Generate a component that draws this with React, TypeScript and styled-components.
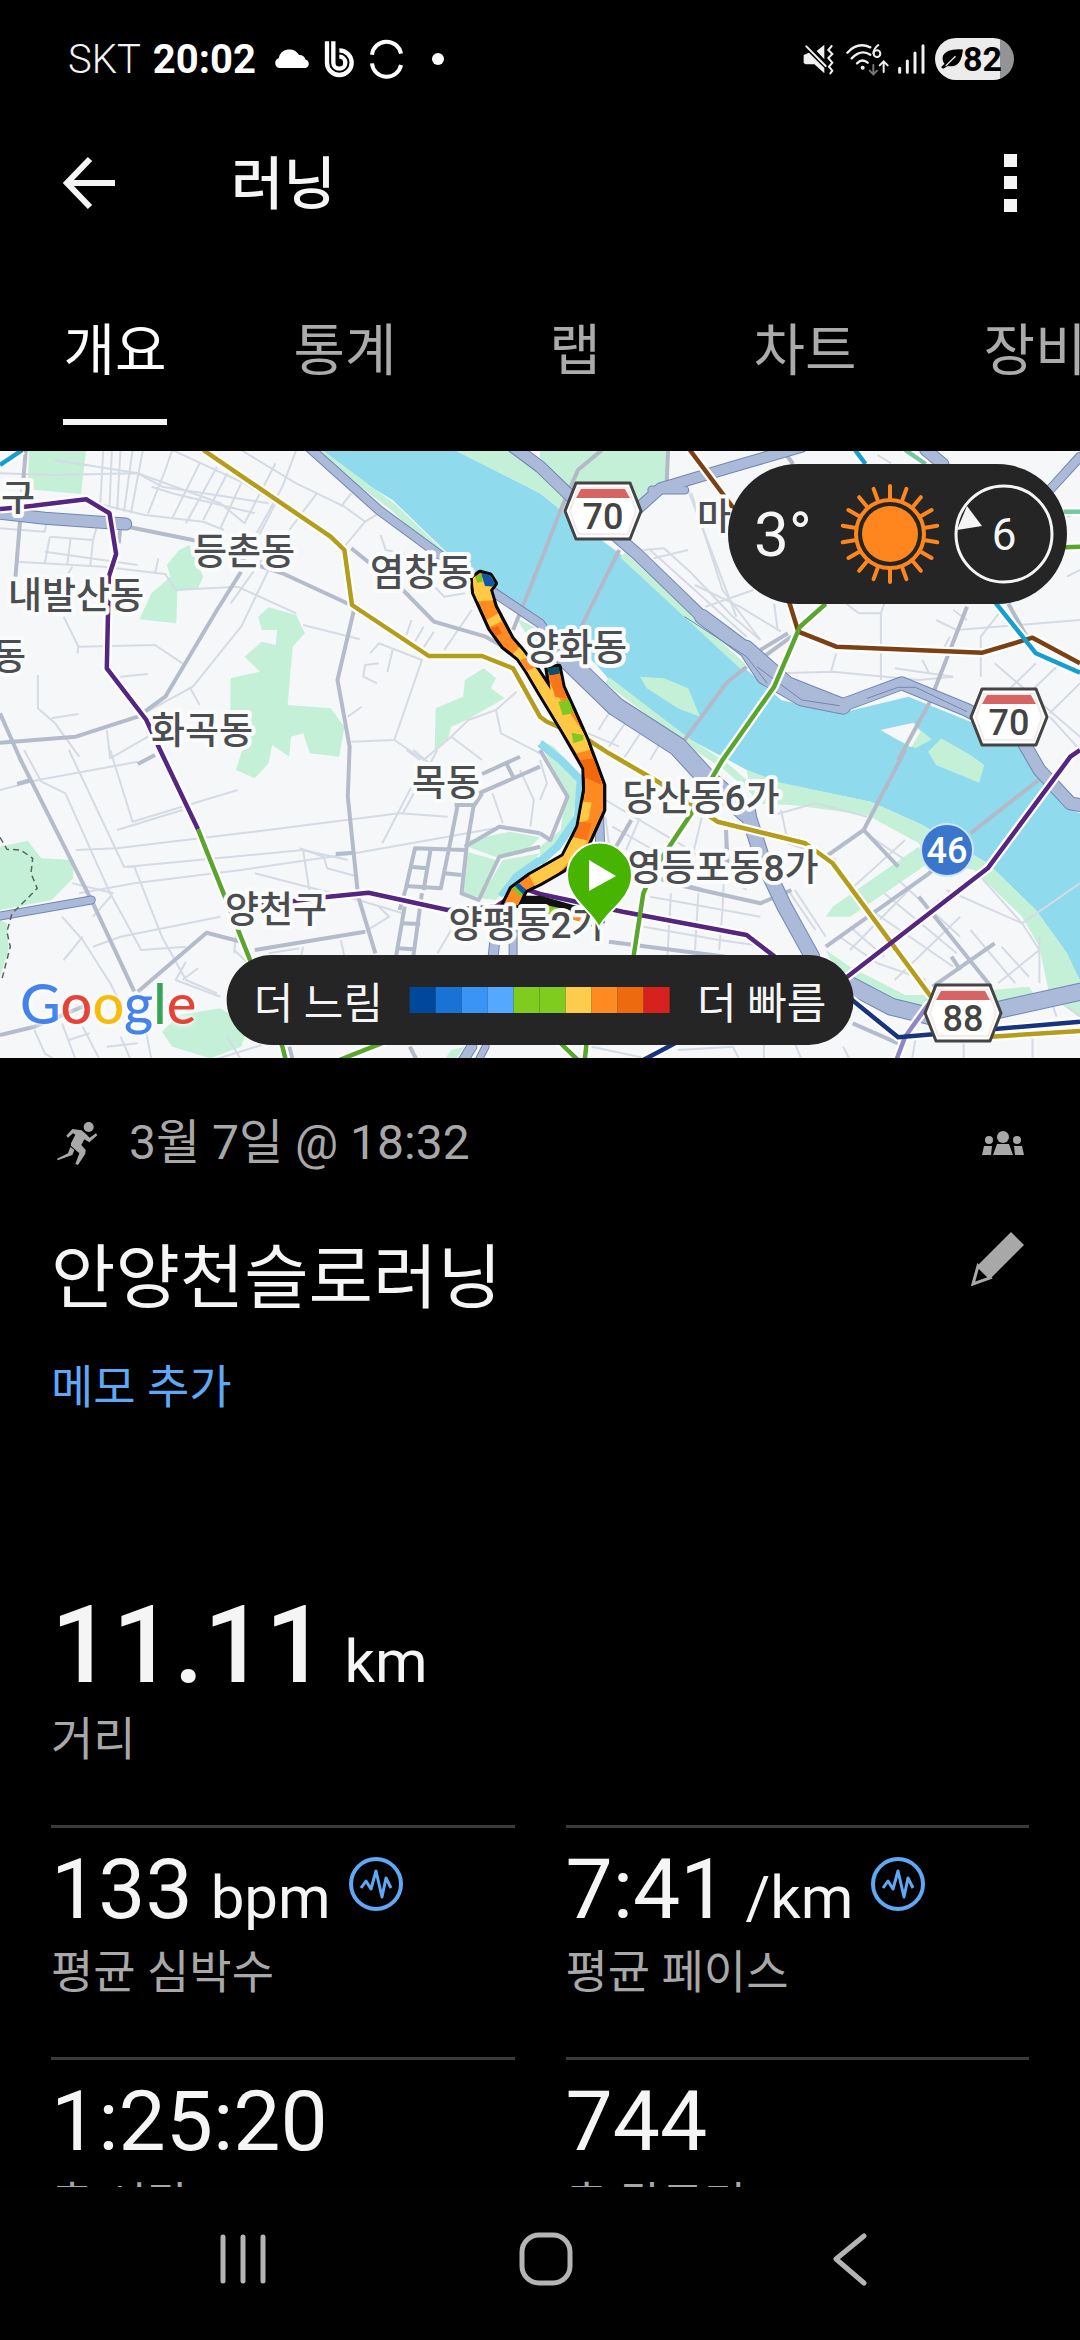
import React from "react";
import styled, { createGlobalStyle } from "styled-components";

const GlobalStyle = createGlobalStyle`
  * { box-sizing: border-box; }
  html, body { margin: 0; background: #000; }
  body { font-family: Roboto, "Noto Sans CJK KR", sans-serif; color: #f5f5f5; }
  h1, h2, p, dl, dd, dt { margin: 0; font-weight: 400; }
`;

/* ---------- map geometry ---------- */

type Tile = "nw" | "ne" | "sw" | "se";
const TILE_ORIGIN: Record<Tile, [number, number]> = {
  nw: [0, 0],
  ne: [1568, 0],
  sw: [0, 900],
  se: [1568, 900],
};

/* "nw 0,10 20,30 ne 5,5" -> one point list in map units */
const plot = (source: string) => {
  let [ox, oy] = TILE_ORIGIN.nw;
  const out: string[] = [];
  source.split(" ").forEach((token) => {
    if (token in TILE_ORIGIN) {
      [ox, oy] = TILE_ORIGIN[token as Tile];
      return;
    }
    const [x, y] = token.split(",").map(Number);
    out.push(`${((x + ox) * 0.34439).toFixed(1)},${((y + oy) / 3 - 1).toFixed(1)}`);
  });
  return out.join(" ");
};

const RIVER =
  "nw 900,0 1320,0 ne 0,130 60,180 230,310 590,650 700,750 870,790 1070,740 1250,815 1400,890 se 1540,180 1568,190 1568,700 1530,610 1440,480 1300,340 1110,225 960,155 700,100 600,60 530,20 ne 420,860 210,700 160,640 0,510 nw 1400,390 1290,300 1140,150";

const PARKS = [
  "nw 85,0 250,0 235,132 80,118",
  "nw 550,285 590,380 575,415 515,420 512,520 405,508 440,430 495,380 485,345 520,300",
  "nw 750,500 780,472 860,495 885,550 850,590 835,765 960,775 1000,830 985,920 900,910 880,850 845,860 840,920 790,885 780,940 740,985 685,960 710,880 668,850 670,685 755,665 710,620 760,575 800,585 805,540 760,540",
  "nw 1405,655 1440,685 1425,715 1465,745 1355,810 1310,830 1300,870 1262,905 1265,775 1345,740 1350,690",
  "nw 1320,0 1480,0 ne 0,60 0,0 375,0 372,95 290,150 200,170 60,180 0,130",
  "ne 290,680 360,685 430,715 465,800 400,775 310,715",
  "ne 1080,820 1138,868 1090,895 1020,860",
  "ne 1165,865 1250,915 se 1290,45 1275,98 1150,45 1127,5",
  "se 600,60 700,98 960,155 1110,225 1300,340 1440,480 1530,610 1568,690 1568,800 1480,740 1450,590 1400,500 1260,360 1130,330 1100,280 950,195 730,165 620,160",
  "se 1100,290 1120,345 900,500 830,500 850,470",
  "se 830,600 900,650 1060,735 1130,735 1130,775 980,760 870,680",
  "se 1310,720 1420,710 1440,740 1330,760",
  "sw 0,290 80,272 120,325 215,330 212,385 150,450 0,480",
  "sw 0,510 20,520 25,600 0,680",
  "sw 470,845 520,795 640,775 720,830 700,890 610,925 500,890",
  "sw 1365,270 1480,245 1568,262 1520,310 1450,325 1362,292",
  "sw 1355,305 1440,330 1390,440 1340,435",
  "sw 1460,330 1568,310 1500,380 1440,450 1395,445",
  "nw 1500,505 1568,540 ne 60,620 0,620",
  "ne 0,870 40,890 se 95,50 110,120 80,270 0,330 0,290 60,240 75,120 20,20",
  "sw 1310,900 1350,890 1320,930 1290,930",
];

const BANKS = [
  "nw 920,0 1140,170 1290,318",
  "ne 195,690 420,868 se 540,50 640,140",
  "ne 240,315 590,650",
];

const STREAMS = [
  "ne 0,880 60,930 se 118,90 110,200 50,290 0,335",
  "sw 1568,330 1500,380 1455,440",
];

const SIDE_STREETS = [
  "nw 0,70 150,75 400,70 640,160 710,220 800,40",
  "nw 160,30 400,70 470,110 780,160",
  "nw 300,0 290,180", "nw 325,0 318,170", "nw 350,0 340,180", "nw 385,0 360,185", "nw 415,0 380,190",
  "nw 430,190 480,60 500,0", "nw 500,205 580,40", "nw 540,220 630,50", "nw 590,210 660,70", "nw 640,235 700,100",
  "nw 240,150 420,195 590,215 650,240", "nw 440,110 500,130 740,190",
  "nw 500,0 710,100 800,160 740,280", "nw 700,0 860,100 1000,170 1060,215 1000,290",
  "nw 860,0 820,110 740,260", "nw 920,130 840,240", "nw 1020,130 990,170", "nw 1100,190 1060,215",
  "nw 0,235 130,245 135,220", "nw 145,260 270,270 280,235", "nw 145,260 130,340", "nw 205,265 195,345", "nw 270,270 262,350", "nw 50,335 300,350 480,372 510,420 690,410", "nw 130,305 400,345", "nw 210,350 175,410", "nw 460,325 450,370",
  "nw 185,500 228,590 450,585 530,640", "nw 228,585 225,610", "nw 350,680 430,672", "nw 110,675 110,775 160,820 230,920", "nw 150,805 228,792",
  "nw 310,840 320,925 430,860", "nw 400,800 560,710 700,530 780,360", "nw 550,710 580,765", "nw 690,410 860,490", "nw 880,525 1045,568", "nw 670,460 760,330",
  "nw 1105,255 1120,300 1170,310 1290,440 1350,430", "nw 1195,510 1180,555", "nw 1230,530 1205,575", "nw 1260,545 1225,600", "nw 1370,480 1290,600",
  "nw 1075,610 1100,580 1225,630 1145,870 1020,875", "nw 1140,600 1125,665", "nw 1100,640 1060,645 1055,680 1095,700", "nw 1050,770 1010,800", "nw 1145,870 1230,930 1310,860 1360,810 1440,780 1500,725", "nw 1440,780 1455,850 1568,910", "nw 1310,860 1400,930",
  "sw 0,120 110,90 400,35", "sw 70,0 120,95 190,130 320,430 410,600 540,590", "sw 200,0 360,350 390,350 470,560 540,690 630,730", "sw 320,0 385,215 690,120", "sw 340,240 530,180",
  "sw 220,300 340,295 700,250 1160,190 1300,200", "sw 370,350 880,300 1010,330", "sw 230,430 390,400 700,360 1030,310 1300,260 1460,230", "sw 740,370 1040,450 1170,490", "sw 880,300 910,500", "sw 870,295 940,320 950,355 1040,380", "sw 1110,280 1200,100", "sw 1200,0 1270,60", "sw 1270,0 1170,190",
  "sw 180,500 240,570 320,700 350,760", "sw 240,560 185,630", "sw 270,590 350,560 640,500", "sw 330,430 210,400", "sw 325,435 270,500", "sw 540,635 510,690 640,740", "sw 575,655 530,690", "sw 680,610 690,500", "sw 680,600 720,640", "sw 780,610 870,595", "sw 880,590 870,640", "sw 990,570 1000,620", "sw 1100,470 1130,500 1060,545", "sw 1180,0 1220,30",
  "sw 100,840 130,910 160,930", "sw 180,820 220,930", "sw 240,830 290,930", "sw 200,870 260,850", "sw 310,890 400,880", "sw 350,860 380,930", "sw 425,850 440,930", "sw 620,930 760,885", "sw 660,860 700,930",
  "sw 1430,130 1460,220", "sw 1510,60 1550,150 1540,230", "sw 1270,610 1310,540",
  "ne 300,300 360,295 440,370 560,500 640,570", "ne 330,325 430,300", "ne 320,300 600,560", "ne 430,120 570,500", "ne 440,130 530,420 640,570", "ne 480,470 620,420", "ne 450,405 580,470 700,545", "ne 680,461 690,540", "ne 980,15 1020,40",
  "ne 700,670 850,665 1100,690 1200,680", "ne 860,610 845,665", "ne 990,610 990,690", "ne 890,461 925,490 990,490 1000,461", "ne 990,490 990,600", "ne 1150,510 1210,540 1568,510", "ne 1200,480 1240,510", "ne 1340,480 1280,560 1280,680", "ne 1030,655 1200,680", "ne 1110,630 1130,670", "ne 1190,560 1170,600", "ne 1320,640 1568,860", "ne 1440,640 1360,720", "ne 1500,650 1420,730", "ne 1568,700 1480,790", "ne 1480,800 1568,900", "ne 1568,190 1530,200", "ne 1530,380 1568,360",
  "ne 140,850 230,890", "ne 230,740 170,840", "ne 190,760 240,790", "ne 260,800 200,890", "ne 310,820 240,930", "ne 360,860 320,930",
  "se 0,30 20,100 0,150", "se 190,150 420,290 600,420", "se 210,230 330,300", "se 300,180 250,300", "se 400,230 380,330", "se 470,200 440,330", "se 540,240 530,480 520,600", "se 190,200 200,280",
  "se 320,440 640,500", "se 380,430 370,620", "se 460,430 450,600", "se 300,530 520,570 660,590", "se 720,420 800,540", "se 740,420 830,560", "se 660,200 800,160 950,200", "se 700,180 720,280 860,330",
  "se 870,560 980,640 1120,690", "se 900,530 1000,620", "se 960,480 1200,650", "se 1000,430 1210,610", "se 1040,390 1220,560", "se 1090,400 900,600", "se 1160,450 950,650", "se 1220,500 1030,690", "se 1250,540 1380,700", "se 1270,370 1400,520 1450,600", "se 1450,560 1450,700", "se 1450,600 1330,700", "se 1340,590 1420,680", "se 1400,520 1568,400", "se 1180,420 1400,520", "se 960,260 1060,330", "se 1060,270 900,420",
  "se 150,890 330,930", "se 560,890 580,930", "se 650,880 650,930", "se 740,880 760,930", "se 880,890 900,930", "se 1090,870 1080,930", "se 1230,880 1230,930", "se 1430,860 1430,930", "se 1490,770 1500,800", "se 1530,770 1568,800", "se 400,900 560,890",
];

const MAIN_STREETS = [
  "nw 370,230 560,270 700,330 820,370 1030,470 980,690 1015,890 sw 1010,140 1040,440 1090,610",
  "nw 700,365 630,480 480,740 400,800 220,860 0,878",
  "nw 0,790 60,930 sw 270,460 390,725",
  "nw 75,0 45,380",
  "nw 350,225 345,280",
  "nw 1020,295 1170,420 1260,515 1410,560 1568,650",
  "sw 400,725 600,548 700,575",
  "sw 740,600 1060,545",
  "sw 0,855 100,830 240,770",
  "sw 50,102 90,90", "sw 400,42 450,15", "sw 975,312 1030,308",
  "sw 1400,72 1510,20", "sw 1390,130 1568,50", "sw 1470,40 1490,80",
  "sw 1330,160 1305,290 1280,415 1180,408 1205,295 1350,300", "sw 1400,130 1375,170 1355,290 1340,430 1390,450 1450,320 1568,290",
  "sw 1320,165 1375,165", "sw 1250,300 1230,420", "sw 1190,350 1240,355", "sw 1290,370 1340,375",
  "sw 1160,480 1180,410", "sw 1150,620 1175,470", "sw 1200,620 1225,430", "sw 1165,520 1220,522", "sw 1155,595 1200,598",
  "sw 1350,290 1450,230 1568,250",
  "sw 840,890 850,930", "sw 1190,890 1210,930",
  "se 0,250 30,270 80,140 0,0",
  "se 210,310 265,210", "se 540,240 545,350", "se 380,400 640,460 730,420", "se 200,575 540,620", "se 250,360 470,420",
  "se 830,590 1130,370 1230,280", "se 1100,440 1310,710", "se 1140,710 1320,580", "se 1195,620 1220,660", "se 940,240 1040,350", "se 830,320 940,240",
  "se 908,820 1040,880", "ne 640,600 720,550", "ne 650,620 730,560",
];

const BRIDGES = [
  "nw 1490,540 1568,340 ne 60,180 110,60 180,0",
  "ne 120,530 230,300",
  "ne 420,870 540,700 600,650",
  "ne 1040,930 1130,760 1240,470",
  "se 940,240 1060,0",
  "se 1250,250 1460,80",
  "ne 705,0 735,42", "ne 1360,461 1440,610", "ne 372,0 368,100",
];

const EXPRESSWAYS: [string, number][] = [
  ["nw 895,-10 1100,180 1290,325 1430,425 1568,520 ne 60,610", 9],
  ["ne 60,610 120,670 220,770 400,890 se 480,80 600,190", 19],
  ["se 600,180 650,340 710,470 790,620", 15],
  ["se 890,700 1020,770 1140,800 1330,780 1568,725", 17],
  ["nw 1490,-10 1568,50 ne 90,140 280,310 470,500", 12],
  ["ne 470,500 600,600 650,680 760,745 880,770", 15],
  ["ne 600,590 720,700 880,765 1050,700 1240,780 1400,870 se 1450,60 1540,160 1568,165", 13],
  ["ne 280,180 350,115 560,50 760,-10", 11],
  ["ne 325,120 420,120", 8],
  ["ne 1120,0 1170,42", 12],
  ["ne 1568,20 1480,120", 9],
  ["nw 0,190 130,205 365,222", 12],
  ["sw 0,498 265,450", 8],
  ["sw 1430,640 1440,540", 10],
  ["sw 1490,640 1490,540", 8],
  ["sw 1340,940 1370,890", 10],
  ["sw 1385,940 1410,890", 7],
  ["se 170,150 175,300", 9],
];

const SUBWAYS: [string, string][] = [
  ["#b39d1b", "nw 590,0 960,260 1000,300 1022,465 1245,618 1400,618 1490,655 1568,800 ne 20,815 140,870 se 200,10 350,100 515,215 770,280 850,340 1135,740"],
  ["#b39d1b", "se 1310,860 1568,843"],
  ["#56257f", "nw 0,177 60,172 250,148 318,190 337,312 316,380 310,655 425,810 sw 465,0 575,238"],
  ["#5aa52d", "sw 575,238 730,640 820,890 830,930"],
  ["#56257f", "sw 720,470 940,442 1070,428 1300,480 1440,470 1520,415 se 0,432 240,485 600,555 720,650"],
  ["#56257f", "se 880,690 1300,355 1540,20 1568,0"],
  ["#7d4012", "ne 435,0 555,165 725,461 750,545 860,590 1285,608 1430,563 1568,640"],
  ["#5aa52d", "ne 830,461 755,530 680,710 530,930 se 490,100 440,190 330,360 300,430 270,630"],
  ["#5aa52d", "se 135,880 130,930"],
  ["#5aa52d", "sw 985,930 1120,875"],
  ["#5aa52d", "se 50,870 110,930"],
  ["#149fd0", "ne 915,0 945,42"],
  ["#149fd0", "ne 1320,455 1440,610 1568,668"],
  ["#149fd0", "nw 0,45 65,0"],
  ["#74c9a0", "ne 1060,0 1120,42"],
  ["#74c9a0", "ne 1520,185 1568,185"],
  ["#5aa52d", "ne 1520,292 1568,290"],
  ["#9186c4", "se 1035,930 1060,860 1130,760"],
  ["#17357f", "se 900,745 1040,862 1568,815"],
  ["#17357f", "se 300,930 400,875"],
];

const PLACES: [string, number, number][] = [
  ["구", 18, 60], ["내발산동", 76, 158], ["등촌동", 244, 114], ["염창동", 421, 135], ["동", 9, 219],
  ["화곡동", 202, 293], ["양화동", 576, 210], ["마", 714, 79], ["목동", 446, 345], ["양천구", 276, 472],
  ["양평동2가", 527, 487], ["당산동6가", 701, 360], ["영등포동8가", 723, 430],
];

const SHIELDS: [string, number, number][] = [["70", 603, 60], ["70", 1009, 266], ["88", 963, 562]];

const ROUTE_BODY =
  "98,85 102,128 150,235 190,290 235,325 262,365 300,430 370,545 433,655 435,720 415,830 370,918 270,975 215,1015 190,1065 235,1065 255,1022 300,1000 370,960 440,890 490,780 490,705 440,570 400,480 368,410 356,350 322,355 332,420 292,360 245,300 215,265 165,170 150,120 165,100 150,76 120,68";

const ROUTE_PACE: [string, string][] = [
  ["#ffc845", "95,80 160,80 165,150 105,155"],
  ["#0f57a8", "122,66 170,80 165,110 135,108"],
  ["#82c822", "105,80 125,72 128,95 112,98"],
  ["#ffc845", "140,210 175,190 185,215 150,230"],
  ["#f2690d", "150,235 175,228 185,250 160,262"],
  ["#ffc845", "220,310 245,285 300,350 340,420 440,560 450,600 410,610 290,420 215,330"],
  ["#ff8a22", "240,330 285,315 290,350 255,365"],
  ["#0b4f68", "315,345 360,340 362,370 330,378"],
  ["#f7761a", "328,376 366,372 378,445 345,440"],
  ["#82c822", "355,455 390,448 400,490 368,496"],
  ["#82c822", "395,548 430,555 430,570 400,580"],
  ["#f2690d", "420,630 465,625 485,705 430,680"],
  ["#ffc845", "425,755 455,757 445,810 410,820"],
  ["#f7761a", "415,815 455,820 440,870 400,862"],
  ["#ffc845", "400,862 445,872 350,975 285,1010 265,970 360,915"],
  ["#0f57a8", "220,1010 235,998 262,1022 245,1035"],
  ["#82c822", "216,1016 225,1008 248,1032 240,1040"],
];

const points = (list: string[], width: number, color: string) =>
  list.map((line) => (
    <polyline key={line} points={plot(line)} fill="none" stroke={color} strokeWidth={width} strokeLinejoin="round" />
  ));

const MapDrawing = () => (
  <MapSvg viewBox="0 0 1080 607" role="img" aria-label="러닝 경로 지도">
    <defs>
      <clipPath id="route-body">
        <polygon points={ROUTE_BODY} />
      </clipPath>
    </defs>
    <rect width="1080" height="607" fill="#f6f7f8" />
    <polygon points={plot(RIVER)} fill="#90daee" />
    {PARKS.map((park) => (
      <polygon key={park} points={plot(park)} fill="#c3f0d6" />
    ))}
    <polygon points={plot("ne 988,840 1085,818 1105,845 1078,892")} fill="#f6f7f8" />
    {points(BANKS, 7, "#c3f0d6")}
    {points(STREAMS, 8, "#90daee")}
    {points(SIDE_STREETS, 2, "#d5dbe4")}
    {points(MAIN_STREETS, 4, "#b4bbca")}
    {points(BRIDGES, 4, "#b4b9c8")}
    {EXPRESSWAYS.map(([line, width]) => (
      <polyline key={line} points={plot(line)} fill="none" stroke="#7286b5" strokeWidth={width + 1} strokeLinecap="round" strokeLinejoin="round" />
    ))}
    {EXPRESSWAYS.map(([line, width]) => (
      <polyline key={line} points={plot(line)} fill="none" stroke="#aabad8" strokeWidth={width - 1} strokeLinecap="round" strokeLinejoin="round" />
    ))}
    {points(["ne 630,650 760,750 870,767", "ne 950,745 1040,712 1090,712 1240,785", "ne 420,500 600,620 660,700"], 1, "#7286b5")}
    <polyline points={plot("sw 0,262 20,298 60,300 95,325 90,370 108,415 80,445 35,490 20,545 30,590 5,690")} fill="none" stroke="#58645f" strokeWidth="1.5" strokeDasharray="6 4" />
    {SUBWAYS.map(([, line]) => (
      <polyline key={line} points={plot(line)} fill="none" stroke="#fff" strokeWidth="9" strokeLinejoin="round" />
    ))}
    {SUBWAYS.map(([color, line]) => (
      <polyline key={line} points={plot(line)} fill="none" stroke={color} strokeWidth="4.5" strokeLinejoin="round" />
    ))}
    <g transform="translate(440 99) scale(.33333)">
      <polyline points="235,1050 300,1050 440,1090 480,1140" fill="none" stroke="#111" strokeWidth="26" />
      <polyline points="300,1075 350,1085 440,1105" fill="none" stroke="#82c822" strokeWidth="26" />
      <polyline points="385,1092 440,1110" fill="none" stroke="#ff8a22" strokeWidth="22" />
      <polygon points={ROUTE_BODY} fill="#ff8a22" stroke="#0a0a0a" strokeWidth="18" strokeLinejoin="round" />
      <g clipPath="url(#route-body)">
        <polygon points={ROUTE_BODY} fill="#ff8a22" />
        {ROUTE_PACE.map(([color, shape]) => (
          <polygon key={shape} points={shape} fill={color} />
        ))}
      </g>
    </g>
    {PLACES.map(([name, x, y]) => (
      <PlaceName key={name + x} x={x} y={y}>
        {name}
      </PlaceName>
    ))}
    {SHIELDS.map(([road, x, y]) => (
      <g key={road + x} transform={`translate(${x} ${y})`}>
        <path d="M-27-28H27L38 0 27 28H-27L-38 0Z" fill="#fff" stroke="#444" strokeWidth="3" strokeLinejoin="round" />
        <path d="M-25-23H25L33 0 25 23H-25L-33 0Z" fill="none" stroke="#f3ece9" strokeWidth="2" />
        <path d="M-22-22H22L27-13H-27Z" fill="#d66463" />
        <RoadNumber y="18">{road}</RoadNumber>
      </g>
    ))}
    <g transform="translate(947 399)">
      <circle r="26" fill="#3a76cc" stroke="#cfe4f8" strokeWidth="2" />
      <RoadNumber y="13" $light>
        46
      </RoadNumber>
    </g>
    <path d="M599 477C593 460 567 449 567 424a32 32 0 1 1 65 0C632 449 606 460 599 477Z" fill="#46b400" stroke="#fff" strokeWidth="2" />
    <path d="M589 409V440L616 425Z" fill="#fff" />
  </MapSvg>
);

const MapSvg = styled.svg`
  display: block;
  width: 100%;
`;

const PlaceName = styled.text`
  font: 500 37px Roboto, "Noto Sans CJK KR", sans-serif;
  text-anchor: middle;
  fill: #4b4d50;
  stroke: #fafbfb;
  stroke-width: 8px;
  stroke-linejoin: round;
  paint-order: stroke;
`;

const RoadNumber = styled.text<{ $light?: boolean }>`
  font: 500 36px Roboto, sans-serif;
  text-anchor: middle;
  fill: ${(p) => (p.$light ? "#fff" : "#444")};
`;

/* ---------- page parts ---------- */

const Screen = styled.div`
  display: flex;
  flex-direction: column;
  height: 100vh;
  overflow: hidden;
  background: #000;
`;

const StatusBar = styled.div`
  display: flex;
  flex: none;
  justify-content: space-between;
  align-items: center;
  height: 118px;
  padding: 0 66px 0 68px;
`;

const StatusGroup = styled.div<{ $gap: number }>`
  display: flex;
  align-items: center;
  gap: ${(p) => p.$gap}px;
`;

const Carrier = styled.span`
  font-size: 40px;
  font-weight: 300;
  color: #f2f2f2;
`;

const Clock = styled.time`
  font-size: 40px;
  font-weight: 700;
  color: #fff;
  margin-right: 6px;
`;

const Battery = styled.span`
  display: flex;
  align-items: center;
  justify-content: center;
  width: 79px;
  height: 42px;
  padding-right: 6px;
  border-radius: 21px;
  background: linear-gradient(to right, #ececec 82%, #949494 82%);
  color: #000;
  font-size: 34px;
  font-weight: 700;
`;

const AppBar = styled.header`
  display: flex;
  flex: none;
  align-items: center;
  height: 130px;
  padding: 0 52px 0 53px;
`;

const IconButton = styled.button`
  display: flex;
  align-items: center;
  justify-content: center;
  padding: 10px;
  border: 0;
  background: none;
  color: inherit;
`;

const ScreenTitle = styled.h1`
  flex: 1;
  margin-left: 104px;
  padding-top: 4px;
  font-size: 57px;
  font-weight: 500;
  line-height: 80px;
`;

const TabBar = styled.nav`
  display: flex;
  flex: none;
  height: 203px;
  padding-top: 54px;
  overflow: hidden;
`;

const Tab = styled.button<{ $active?: boolean }>`
  display: flex;
  flex: 0 0 230px;
  justify-content: center;
  padding: 0;
  border: 0;
  background: none;
  font-family: inherit;
  font-size: 56px;
  line-height: 98px;
  color: ${(p) => (p.$active ? "#fff" : "#ababab")};

  span {
    height: 123px;
    border-bottom: 6px solid ${(p) => (p.$active ? "#f5f5f5" : "transparent")};
  }
`;

const MapPanel = styled.section`
  position: relative;
  flex: none;
  background: #f6f7f8;
`;

const Weather = styled.div`
  position: absolute;
  top: 13px;
  right: 13px;
  display: flex;
  align-items: center;
  gap: 13px;
  width: 339px;
  height: 140px;
  padding: 0 12px 0 26px;
  border-radius: 70px;
  background: #252525;
`;

const Temperature = styled.span`
  flex: 1;
  font-size: 62px;
`;

const WindSpeed = styled.text`
  font: 400 44px Roboto, sans-serif;
  text-anchor: middle;
  fill: #f5f5f5;
`;

const PaceLegend = styled.div`
  position: absolute;
  bottom: 13px;
  left: 50%;
  display: flex;
  align-items: center;
  gap: 27px;
  height: 90px;
  padding: 0 27px;
  border-radius: 45px;
  background: #252525;
  font-size: 43px;
  white-space: nowrap;
  transform: translateX(-50%);
`;

const PaceScale = styled.div`
  display: flex;
  height: 26px;
`;

const PaceStep = styled.i<{ $color: string }>`
  width: 26px;
  background: ${(p) => p.$color};
`;

const MapCredit = styled.div`
  position: absolute;
  left: 20px;
  bottom: 21px;
  font: 500 56px/68px Lato, sans-serif;
  text-shadow: 0 0 4px #fff, 0 0 8px #fff;
`;

const CreditLetter = styled.span<{ $color: string }>`
  color: ${(p) => p.$color};
`;

const Summary = styled.main`
  flex: 1;
  min-height: 0;
  overflow: hidden;
  padding: 57px 51px 0;
`;

const MetaRow = styled.div`
  display: flex;
  align-items: center;
  height: 56px;
  padding: 0 5px 0 3px;
  color: #a8a8a8;
`;

const ActivityDate = styled.time`
  flex: 1;
  margin-left: 27px;
  font-size: 48px;
  line-height: 56px;
`;

const TitleRow = styled.div`
  display: flex;
  justify-content: space-between;
  align-items: flex-start;
  margin-top: 56px;
`;

const ActivityTitle = styled.h2`
  font-size: 70px;
  line-height: 104px;
`;

const PencilButton = styled(IconButton)`
  padding: 5px;
`;

const AddNote = styled.button`
  display: block;
  margin-top: 26px;
  padding: 0;
  border: 0;
  background: none;
  font-family: inherit;
  font-size: 46px;
  line-height: 60px;
  color: #5ea8f5;
`;

const Stats = styled.dl`
  display: grid;
  grid-template-columns: 1fr 1fr;
  column-gap: 51px;
  margin-top: 164px;
`;

const Stat = styled.div<{ $wide?: boolean }>`
  display: flex;
  flex-direction: column-reverse;
  justify-content: flex-end;
  grid-column: ${(p) => (p.$wide ? "1 / -1" : "auto")};
  height: ${(p) => (p.$wide ? "244px" : "232px")};
  padding-top: ${(p) => (p.$wide ? 0 : "10px")};
  border-top: ${(p) => (p.$wide ? "0" : "3px solid #3b3b3b")};
`;

const StatValue = styled.dd<{ $wide?: boolean }>`
  display: flex;
  align-items: baseline;
  gap: 18px;
  font-size: ${(p) => (p.$wide ? "108px" : "84px")};
  font-weight: ${(p) => (p.$wide ? 500 : 400)};
  line-height: ${(p) => (p.$wide ? "128px" : "104px")};
`;

const StatUnit = styled.span`
  font-size: 60px;
  font-weight: 400;
  line-height: 60px;
`;

const StatLabel = styled.dt`
  font-size: 46px;
  line-height: 60px;
  color: #a8a8a8;
`;

const SystemNav = styled.nav`
  display: flex;
  flex: none;
  align-items: flex-start;
  justify-content: space-between;
  height: 153px;
  padding: 35px 194px 0 206px;
  background: #010101;
  color: #b4b4b4;
`;

/* ---------- icons ---------- */

const PulseIcon = () => (
  <svg width="54" height="61" viewBox="-27 -27 54 61" fill="none" stroke="#5ea8f5" aria-hidden="true">
    <circle r="25" strokeWidth="4" />
    <path d="M-15 4-10-3-5 5 0-13 6 13 10-6 15 4" strokeWidth="3" strokeLinejoin="round" />
  </svg>
);

const RunnerIcon = () => (
  <svg width="48" height="48" viewBox="43 57 144 144" fill="currentColor" aria-hidden="true">
    <circle cx="147" cy="81" r="15" />
    <path d="M80 107 98 87 126 91 139 102 150 113 169 100 173 106 149 127 134 118 125 135 138 150 137 161 115 195 107 192 119 160 94 138 94 130 107 104 100 100 85 113Z" />
    <path d="M92 141 104 150 98 165 54 181 52 176 85 160Z" />
  </svg>
);

const GroupIcon = () => (
  <svg width="42" height="24" viewBox="0 0 42 24" fill="currentColor" aria-hidden="true">
    <circle cx="7" cy="9" r="4" />
    <circle cx="21" cy="6" r="6" />
    <circle cx="35" cy="9" r="4" />
    <path d="M2 15H10L9 24H0ZM15 13H27L31 24H11ZM32 15H40L42 24H33Z" />
  </svg>
);

const PencilIcon = () => (
  <svg width="53" height="54" viewBox="0 0 53 54" aria-hidden="true">
    <path d="M40 0 53 13 19 47 6 34Z" fill="#a8a8a8" />
    <path d="M7 34 2 52 19 46Z" fill="#000" stroke="#a8a8a8" strokeWidth="3" />
  </svg>
);

const SunIcon = () => (
  <svg width="100" height="100" viewBox="-50 -50 100 100" fill="none" stroke="#ff861f" aria-hidden="true">
    <circle r="28" fill="#ff861f" stroke="none" />
    <circle r="34" strokeWidth="4" />
    {Array.from({ length: 18 }, (_, i) => (
      <path key={i} d="M0-36V-48" strokeWidth="4" strokeLinecap="round" transform={`rotate(${i * 20})`} />
    ))}
  </svg>
);

const WindIcon = () => (
  <svg width="102" height="102" viewBox="-51 -51 102 102" role="img" aria-label="바람 6">
    <circle r="48" fill="none" stroke="#f5f5f5" strokeWidth="3" />
    <path d="M-37-28-22-8-47-4Z" fill="#f5f5f5" />
    <WindSpeed y="16">6</WindSpeed>
  </svg>
);

const NoticeIcons = () => (
  <svg width="170" height="40" viewBox="672 57 510 120" fill="none" stroke="#fff" aria-hidden="true">
    <path d="M688 144a15 15 0 0 1-2-29 33 33 0 0 1 61-10 20 20 0 0 1 20 14 13 13 0 0 1 0 25Z" fill="#fff" stroke="none" />
    <path d="M831 64V128A37 37 0 1 0 868 91" strokeWidth="13" />
    <path d="M850 64V128A18 18 0 1 0 868 110" strokeWidth="13" />
    <path d="M966 104A44 44 0 0 1 1053 101M966 130A44 44 0 0 0 1053 135" strokeWidth="12" />
    <circle cx="1164" cy="117" r="18" fill="#fff" stroke="none" />
  </svg>
);

const SignalIcons = () => (
  <svg width="124" height="34" viewBox="64 64 372 102" fill="none" stroke="#f0f0f0" strokeLinecap="round" aria-hidden="true">
    <path d="M66 103 82 96 128 142V158L98 131H72L66 127ZM105 91 128 72V116Z" fill="#f0f0f0" stroke="none" />
    <path d="M74 77 132 136" strokeWidth="6" />
    <path d="M150 76 140 88 152 100 140 112 152 126 142 138 152 150 146 158" strokeWidth="6" />
    <path d="M197 96Q228 62 266 80M210 113Q238 84 266 102M226 128Q242 112 258 126" strokeWidth="7" />
    <circle cx="243" cy="141" r="6" fill="#f0f0f0" stroke="none" />
    <path d="M290 73Q276 84 275 98" strokeWidth="6" />
    <circle cx="286" cy="99" r="10" strokeWidth="6" />
    <path d="M275 133V160M264 150 275 161 286 150" stroke="#777" strokeWidth="6" />
    <path d="M306 154V124M294 134 306 122 318 134" strokeWidth="6" />
    <path d="M354 143V155M377 121V155M400 97V155M424 75V155" strokeWidth="9" />
  </svg>
);

const LeafIcon = () => (
  <svg width="22" height="22" viewBox="482 86 64 60" aria-hidden="true">
    <path d="M546 88Q500 84 488 106 484 120 492 130L482 140 488 144 502 136Q526 142 538 120 544 108 546 88Z" fill="#000" />
    <path d="M496 136 524 108" stroke="#ececec" strokeWidth="4" />
  </svg>
);

/* ---------- data ---------- */

const TABS = ["개요", "통계", "랩", "차트", "장비"];
const PACE_COLORS = ["#00489c", "#1973d6", "#3a94f5", "#55a8ff", "#80cc1e", "#80cc1e", "#fccc4d", "#ff8a22", "#ee6a0e", "#d6211f"];
const CREDIT: [string, string][] = [["G", "#4583ec"], ["o", "#e64236"], ["o", "#f8bb0c"], ["g", "#4583ec"], ["l", "#35a553"], ["e", "#e64236"]];

type StatItem = { label: string; value: string; unit?: string; wide?: boolean; pulse?: boolean };
const STATS: StatItem[] = [
  { label: "거리", value: "11.11", unit: "km", wide: true },
  { label: "평균 심박수", value: "133", unit: "bpm", pulse: true },
  { label: "평균 페이스", value: "7:41", unit: "/km", pulse: true },
  { label: "총 시간", value: "1:25:20" },
  { label: "총 칼로리", value: "744" },
];

export default function App() {
  return (
    <Screen>
      <GlobalStyle />
      <StatusBar>
        <StatusGroup $gap={12}>
          <Carrier>SKT</Carrier>
          <Clock>20:02</Clock>
          <NoticeIcons />
        </StatusGroup>
        <StatusGroup $gap={8}>
          <SignalIcons />
          <Battery>
            <LeafIcon />
            82
          </Battery>
        </StatusGroup>
      </StatusBar>

      <AppBar>
        <IconButton aria-label="뒤로">
          <svg width="54" height="54" viewBox="0 0 54 54" fill="none" stroke="currentColor" strokeWidth="6">
            <path d="M27 3 4 27 27 51M4 27H52" />
          </svg>
        </IconButton>
        <ScreenTitle>러닝</ScreenTitle>
        <IconButton aria-label="더보기">
          <svg width="14" height="60" viewBox="0 0 14 60" fill="currentColor">
            <path d="M0 1H13V14H0ZM0 23H13V36H0ZM0 46H13V59H0Z" />
          </svg>
        </IconButton>
      </AppBar>

      <TabBar>
        {TABS.map((name, i) => (
          <Tab key={name} $active={i === 0}>
            <span>{name}</span>
          </Tab>
        ))}
      </TabBar>

      <MapPanel>
        <MapDrawing />
        <Weather>
          <Temperature>3°</Temperature>
          <SunIcon />
          <WindIcon />
        </Weather>
        <MapCredit>
          {CREDIT.map(([letter, color], i) => (
            <CreditLetter key={i} $color={color}>
              {letter}
            </CreditLetter>
          ))}
        </MapCredit>
        <PaceLegend>
          <span>더 느림</span>
          <PaceScale>
            {PACE_COLORS.map((color, i) => (
              <PaceStep key={i} $color={color} />
            ))}
          </PaceScale>
          <span>더 빠름</span>
        </PaceLegend>
      </MapPanel>

      <Summary>
        <MetaRow>
          <RunnerIcon />
          <ActivityDate>3월 7일 @ 18:32</ActivityDate>
          <GroupIcon />
        </MetaRow>
        <TitleRow>
          <ActivityTitle>안양천슬로러닝</ActivityTitle>
          <PencilButton aria-label="편집">
            <PencilIcon />
          </PencilButton>
        </TitleRow>
        <AddNote>메모 추가</AddNote>
        <Stats>
          {STATS.map((item) => (
            <Stat key={item.label} $wide={item.wide}>
              <StatLabel>{item.label}</StatLabel>
              <StatValue $wide={item.wide}>
                {item.value}
                {item.unit && <StatUnit>{item.unit}</StatUnit>}
                {item.pulse && <PulseIcon />}
              </StatValue>
            </Stat>
          ))}
        </Stats>
      </Summary>

      <SystemNav>
        <IconButton aria-label="최근 앱">
          <svg width="54" height="54" viewBox="0 0 54 54" fill="none" stroke="currentColor" strokeWidth="5" strokeLinecap="round">
            <path d="M7 5V49M27 5V49M47 5V49" />
          </svg>
        </IconButton>
        <IconButton aria-label="홈">
          <svg width="54" height="54" viewBox="0 0 54 54" fill="none" stroke="currentColor" strokeWidth="5">
            <rect x="3" y="3" width="48" height="48" rx="17" />
          </svg>
        </IconButton>
        <IconButton aria-label="뒤로 가기">
          <svg width="54" height="54" viewBox="0 0 54 54" fill="none" stroke="currentColor" strokeWidth="5" strokeLinecap="round" strokeLinejoin="round">
            <path d="M42 4 14 27 42 51" />
          </svg>
        </IconButton>
      </SystemNav>
    </Screen>
  );
}
